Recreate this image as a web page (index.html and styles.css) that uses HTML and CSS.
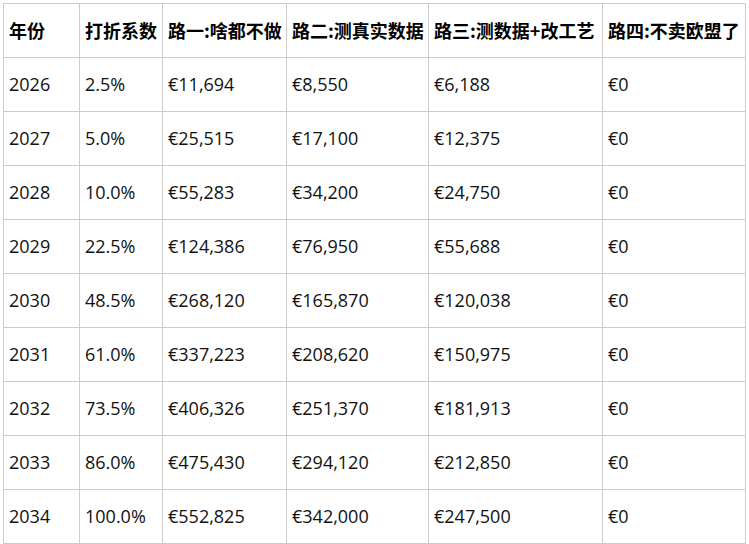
FILE: index.html
```html
<!DOCTYPE html>
<html lang="zh">
<head>
<meta charset="utf-8">
<link rel="stylesheet" href="styles.css">
</head>
<body>
<table class="grid">
  <colgroup>
    <col class="c1"><col class="c2"><col class="c3"><col class="c4"><col class="c5"><col class="c6">
  </colgroup>
  <thead>
    <tr><th>年份</th><th>打折系数</th><th>路一:啥都不做</th><th>路二:测真实数据</th><th>路三:测数据+改工艺</th><th>路四:不卖欧盟了</th></tr>
  </thead>
  <tbody>
    <tr><td>2026</td><td>2.5%</td><td>€11,694</td><td>€8,550</td><td>€6,188</td><td>€0</td></tr>
    <tr><td>2027</td><td>5.0%</td><td>€25,515</td><td>€17,100</td><td>€12,375</td><td>€0</td></tr>
    <tr><td>2028</td><td>10.0%</td><td>€55,283</td><td>€34,200</td><td>€24,750</td><td>€0</td></tr>
    <tr><td>2029</td><td>22.5%</td><td>€124,386</td><td>€76,950</td><td>€55,688</td><td>€0</td></tr>
    <tr><td>2030</td><td>48.5%</td><td>€268,120</td><td>€165,870</td><td>€120,038</td><td>€0</td></tr>
    <tr><td>2031</td><td>61.0%</td><td>€337,223</td><td>€208,620</td><td>€150,975</td><td>€0</td></tr>
    <tr><td>2032</td><td>73.5%</td><td>€406,326</td><td>€251,370</td><td>€181,913</td><td>€0</td></tr>
    <tr><td>2033</td><td>86.0%</td><td>€475,430</td><td>€294,120</td><td>€212,850</td><td>€0</td></tr>
    <tr><td>2034</td><td>100.0%</td><td>€552,825</td><td>€342,000</td><td>€247,500</td><td>€0</td></tr>
  </tbody>
</table>
</body>
</html>
```

FILE: styles.css
```css
html, body {
  background: #ffffff;
}
body {
  margin: 3px;
  font-family: "Open Sans", "Noto Sans CJK SC", sans-serif;
  font-size: 18px;
  color: #111111;
}
.grid {
  border-collapse: collapse;
  table-layout: fixed;
  width: 742px;
}
.c1 { width: 76px; }
.c2 { width: 83px; }
.c3 { width: 124px; }
.c4 { width: 142px; }
.c5 { width: 174px; }
.c6 { width: 143px; }
.grid th,
.grid td {
  border: 1px solid #cccccc;
  height: 53px;
  padding: 0 0 0 5px;
  text-align: left;
  vertical-align: middle;
  white-space: nowrap;
  overflow: hidden;
  line-height: 1.2;
}
.grid th {
  font-family: "Noto Sans CJK SC", "Open Sans", sans-serif;
  font-weight: 700;
  color: #000000;
}
```
